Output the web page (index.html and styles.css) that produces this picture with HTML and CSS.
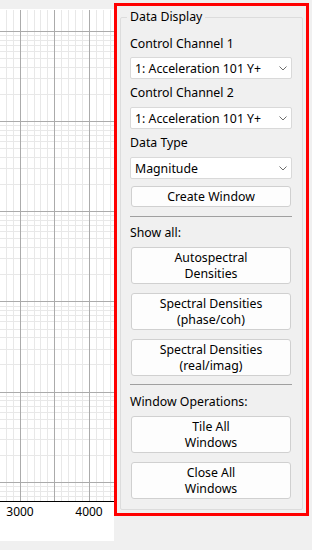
FILE: index.html
```html
<!DOCTYPE html>
<html>
<head>
<meta charset="utf-8">
<link rel="stylesheet" href="styles.css">
</head>
<body>
<div class="app">
  <div class="plot">
    <svg class="plot-svg" width="114" height="532" viewBox="0 9 114 532">
      <path class="minor" d="M6.5 10V501M13.5 10V501M27.5 10V501M34.5 10V501M40.5 10V501M47.5 10V501M61.5 10V501M68.5 10V501M75.5 10V501M82.5 10V501M96.5 10V501M103.5 10V501M110.5 10V501
      M0 35.5H114M0 40.5H114M0 45.5H114M0 51.5H114M0 58.5H114M0 67.5H114M0 78.5H114M0 94.5H114
      M0 125.5H114M0 130.5H114M0 135.5H114M0 141.5H114M0 148.5H114M0 157.5H114M0 168.5H114M0 184.5H114
      M0 215.5H114M0 220.5H114M0 225.5H114M0 231.5H114M0 238.5H114M0 247.5H114M0 258.5H114M0 274.5H114
      M0 306.5H114M0 310.5H114M0 315.5H114M0 321.5H114M0 329.5H114M0 337.5H114M0 349.5H114M0 364.5H114
      M0 396.5H114M0 400.5H114M0 406.5H114M0 412.5H114M0 419.5H114M0 428.5H114M0 439.5H114M0 455.5H114
      M0 486.5H114M0 491.5H114M0 496.5H114"/>
      <path class="major" d="M20.5 10V501M54.5 10V501M89.5 10V501M0 31.5H114M0 121.5H114M0 211.5H114M0 301.5H114M0 392.5H114M0 482.5H114"/>
      <path class="axis" d="M0 501.5H114"/>
      <text class="tick" x="20" y="516">3000</text>
      <text class="tick" x="89" y="516">4000</text>
    </svg>
  </div>
  <div class="panel">
    <fieldset class="group">
      <legend class="group-title">Data Display</legend>
      <div class="label first">Control Channel 1</div>
      <div class="combo"><span>1: Acceleration 101 Y+</span><svg class="chev" width="8" height="5" viewBox="0 0 8 5"><path d="M0.5 0.5L4 4L7.5 0.5"/></svg></div>
      <div class="label">Control Channel 2</div>
      <div class="combo"><span>1: Acceleration 101 Y+</span><svg class="chev" width="8" height="5" viewBox="0 0 8 5"><path d="M0.5 0.5L4 4L7.5 0.5"/></svg></div>
      <div class="label">Data Type</div>
      <div class="combo"><span>Magnitude</span><svg class="chev" width="8" height="5" viewBox="0 0 8 5"><path d="M0.5 0.5L4 4L7.5 0.5"/></svg></div>
      <div class="btn single create">Create Window</div>
      <div class="sep"></div>
      <div class="label section">Show all:</div>
      <div class="btn double first-btn"><span class="ln">Autospectral</span><span class="ln">Densities</span></div>
      <div class="btn double"><span class="ln">Spectral Densities</span><span class="ln">(phase/coh)</span></div>
      <div class="btn double"><span class="ln">Spectral Densities</span><span class="ln">(real/imag)</span></div>
      <div class="sep sep2"></div>
      <div class="label section2">Window Operations:</div>
      <div class="btn double first-btn"><span class="ln">Tile All</span><span class="ln">Windows</span></div>
      <div class="btn double"><span class="ln">Close All</span><span class="ln">Windows</span></div>
    </fieldset>
  </div>
</div>
</body>
</html>
```
FILE: styles.css
```css
* { box-sizing: border-box; }
html, body {
  margin: 0;
  padding: 0;
  background: #f0f0f0;
}
body {
  width: 312px;
  height: 550px;
  overflow: hidden;
  font-family: "Noto Sans", "DejaVu Sans", sans-serif;
  font-size: 12.3px;
  color: #000;
}
.app {
  display: flex;
  align-items: flex-start;
}
.plot {
  margin-top: 9px;
  width: 114px;
  height: 532px;
  background: #fff;
  flex: none;
}
.plot-svg { display: block; }
.minor { stroke: #e8e8e8; stroke-width: 1; fill: none; }
.major { stroke: #ababab; stroke-width: 1; fill: none; }
.axis { stroke: #000; stroke-width: 1; fill: none; }
.tick {
  font-family: "Noto Sans", "DejaVu Sans", sans-serif;
  font-size: 12px;
  text-anchor: middle;
  fill: #000;
}
.panel {
  margin-top: 3px;
  width: 195px;
  border: 3px solid #f00;
  padding: 3px;
  flex: none;
}
.group {
  margin: 0;
  border: 1px solid #dcdcdc;
  border-radius: 2px;
  padding: 0 10px 10px 9px;
  min-width: 0;
}
.group-title {
  margin-left: -3px;
  padding: 0 3px;
  line-height: 16px;
  height: 16px;
}
.label {
  line-height: 16px;
  height: 16px;
  margin-top: 6px;
  white-space: nowrap;
}
.label.first { margin-top: 11px; }
.combo {
  height: 22px;
  margin-top: 6px;
  background: #fff;
  border: 1px solid #d9d9d9;
  border-radius: 2px;
  display: flex;
  align-items: center;
  justify-content: space-between;
  padding: 0 4px;
  white-space: nowrap;
}
.label.first + .combo { margin-top: 5px; }
.chev { display: block; margin-top: 1px; }
.chev path { stroke: #6d6d6d; stroke-width: 1; fill: none; }
.btn {
  margin: 0 1px;
  background: #fdfdfd;
  border: 1px solid #d0d0d0;
  border-radius: 3px;
  text-align: center;
  display: flex;
  flex-direction: column;
  align-items: center;
  justify-content: center;
  white-space: nowrap;
}
.btn.single { height: 21px; line-height: 16px; }
.btn.create { margin-top: 7px; }
.btn.double {
  height: 37px;
  margin-top: 9px;
}
.ln { display: block; line-height: 16px; height: 16px; }
.btn.double.first-btn { margin-top: 6px; }
.sep {
  height: 1px;
  background: #a0a0a0;
  margin-top: 9px;
}
.sep2 { margin-top: 8px; }
.label.section { margin-top: 8px; }
.label.section2 { margin-top: 9px; }
```
